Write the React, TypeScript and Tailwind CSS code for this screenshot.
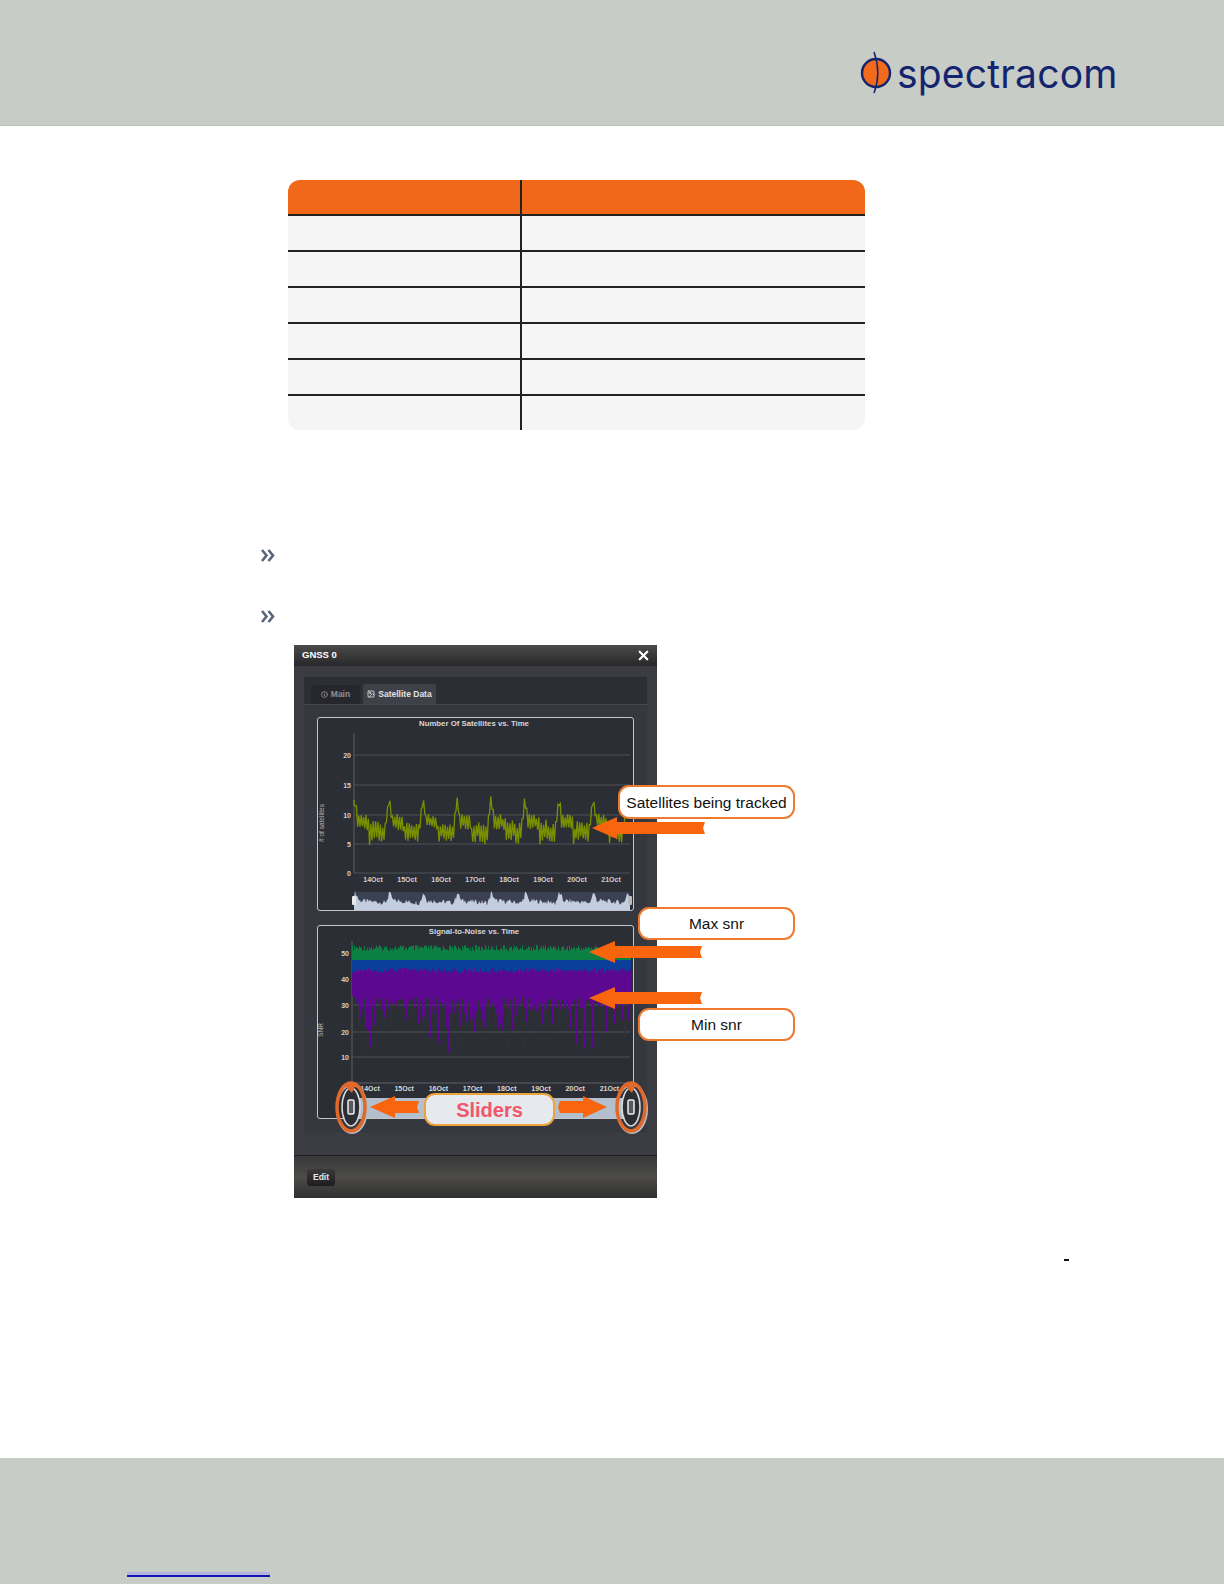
import { Image, Info, X } from 'lucide-react';

// deterministic noise so the charts look the same on every run
const noise = (i: number) => {
  const v = Math.sin(i * 12.9898) * 43758.5453;
  return v - Math.floor(v);
};

const DAYS = ['14Oct', '15Oct', '16Oct', '17Oct', '18Oct', '19Oct', '20Oct', '21Oct'];

// stepped zigzag that falls from a peak at the start of each day
function satellitesPath() {
  let d = 'M354 800';
  for (let x = 354, i = 0; x < 627; x += 1.2, i++) {
    const phase = (((x - 355) % 34) + 34) % 34 / 34;
    let mid = 830;
    let swing = 10;
    if (phase < 0.07) {
      mid = 800 + phase * 200;
      swing = 5;
    } else if (phase < 0.42) {
      mid = 820 + phase * 8;
      swing = 8;
    } else if (phase < 0.9) {
      mid = 832 + Math.sin(phase * 18) * 2;
      swing = 11;
    } else {
      mid = 826 - (phase - 0.9) * 270;
      swing = 6;
    }
    const y = mid + (i % 2 === 0 ? -1 : 1) * swing * (0.45 + noise(i) * 0.55);
    d += `L${x.toFixed(1)} ${y.toFixed(1)}`;
  }
  return d;
}

function navigatorPath(x0: number, x1: number, base: number) {
  let d = `M${x0} ${base}`;
  for (let x = x0, i = 0; x <= x1; x += 1, i++) {
    const phase = (((x - 355) % 34) + 34) % 34 / 34;
    const peak = phase < 0.1 ? 1 - phase * 5 : phase > 0.88 ? (phase - 0.88) * 6 : 0.3 - phase * 0.25;
    d += `L${x} ${(base - 5 - peak * 11 - noise(i) * 5).toFixed(1)}`;
  }
  return d + `L${x1} ${base}Z`;
}

function bandPath(from: (i: number) => number, to: (i: number) => number) {
  let d = '';
  for (let x = 352, i = 0; x < 631; x += 1, i++) {
    d += `M${x + 0.5} ${from(i).toFixed(1)}V${to(i).toFixed(1)}`;
  }
  return d;
}

const satellites = satellitesPath();
const navTop = navigatorPath(354, 630, 911);
const green = bandPath((i) => 945 + noise(i) * 6, () => 960);
const blue = bandPath(() => 958, (i) => 968 + noise(i + 11) * 5);
const purple = bandPath(
  () => 968,
  (i) => {
    const n = noise(i + 23);
    return n > 0.93 ? 1034 + noise(i) * 20 : n > 0.65 ? 1012 + noise(i) * 20 : 996 + noise(i) * 14;
  }
);

function SatelliteChart() {
  const grid: [number, string][] = [[755, '20'], [785, '15'], [815, '10'], [844, '5'], [873, '0']];
  return (
    <div className="h-[194px] rounded-[3px] border border-[#c4c6cc] bg-[#2c2e35]">
      <svg viewBox="318 718 315 192" className="block h-[192px] w-[315px]" fontFamily="'Liberation Sans', sans-serif" fontWeight="700">
        <text x="474" y="726" textAnchor="middle" fontSize="7.8" fill="#d8d8d8">Number Of Satellites vs. Time</text>
        <line x1="354" y1="733" x2="354" y2="873" stroke="#6c6f75" strokeWidth="0.8" />
        {grid.map(([y, label]) => (
          <g key={label}>
            <line x1="354" y1={y} x2="630" y2={y} stroke="#585b62" strokeWidth="0.8" />
            <text x="351" y={y + 3} textAnchor="end" fontSize="7" fill="#d0d0d0">{label}</text>
          </g>
        ))}
        <text transform="translate(324 823) rotate(-90)" textAnchor="middle" fontSize="6.5" fontWeight="400" fill="#b8b8b8"># of satellites</text>
        <path d={satellites} stroke="#7a9000" strokeWidth="1.3" fill="none" />
        {DAYS.map((day, i) => (
          <text key={day} x={373 + i * 34} y="882" textAnchor="middle" fontSize="7" fill="#d0d0d0">{day}</text>
        ))}
        <rect x="354" y="892" width="276" height="18" fill="#3b4052" />
        <path d={navTop} fill="#c3cde0" />
        <rect x="352" y="896" width="4" height="9" rx="1" fill="#e8e8e8" />
        <rect x="628" y="896" width="4" height="9" rx="1" fill="#bbbbbb" />
      </svg>
    </div>
  );
}

function SnrChart() {
  const grid: [number, string][] = [[953, '50'], [979, '40'], [1005, '30'], [1032, '20'], [1057, '10']];
  return (
    <div className="h-[194px] rounded-[3px] border border-[#c4c6cc] bg-[#2c2e35]">
      <svg viewBox="318 926 315 192" className="block h-[192px] w-[315px]" fontFamily="'Liberation Sans', sans-serif" fontWeight="700">
        <text x="474" y="934" textAnchor="middle" fontSize="7.8" fill="#d8d8d8">Signal-to-Noise vs. Time</text>
        <line x1="352" y1="941" x2="352" y2="1083" stroke="#6c6f75" strokeWidth="0.8" />
        <line x1="352" y1="1083" x2="630" y2="1083" stroke="#6c6f75" strokeWidth="0.8" />
        {grid.map(([y, label]) => (
          <g key={label}>
            <line x1="352" y1={y} x2="630" y2={y} stroke="#585b62" strokeWidth="0.8" />
            <text x="349" y={y + 3} textAnchor="end" fontSize="7" fill="#d0d0d0">{label}</text>
          </g>
        ))}
        <text transform="translate(323 1030) rotate(-90)" textAnchor="middle" fontSize="6.5" fontWeight="400" fill="#b8b8b8">SNR</text>
        <path d={purple} stroke="#5c0890" strokeWidth="1" fill="none" />
        <path d={blue} stroke="#0b3f9c" strokeWidth="1" fill="none" />
        <path d={green} stroke="#0b8042" strokeWidth="1" fill="none" />
        {DAYS.map((day, i) => (
          <text key={day} x={370 + i * 34.2} y="1091" textAnchor="middle" fontSize="7" fill="#d8d8d8">{day}</text>
        ))}
        <rect x="352" y="1098" width="280" height="20" fill="#b4bfce" />
      </svg>
    </div>
  );
}

function Callout({ className, children }: { className: string; children: string }) {
  return (
    <div className={`absolute flex items-center justify-center rounded-[11px] border-2 border-[#ee7a30] bg-white pt-[1px] font-['Liberation_Sans',sans-serif] text-[15.5px] text-[#111] ${className}`}>
      {children}
    </div>
  );
}

// arrows and slider rings sit on top of the dialog, so they share one overlay
function Overlay() {
  const arrow = (tip: number, y: number, head: number, end: number, half: number, shaft: number) =>
    `M${tip} ${y}L${head} ${y - half}V${y - shaft}H${end}l-2 ${shaft}l2 ${shaft}H${head}V${y + half}Z`;
  return (
    <svg viewBox="294 645 520 560" className="pointer-events-none absolute left-0 top-0 h-[560px] w-[520px]">
      <path d={arrow(592, 828, 617, 705, 11, 6)} fill="#f9650c" />
      <path d={arrow(589, 952, 615, 702, 11, 6)} fill="#f9650c" />
      <path d={arrow(589, 998, 615, 702, 11, 6)} fill="#f9650c" />
      <path d={arrow(370, 1107, 395, 419, 11, 6)} fill="#f9650c" />
      <path d={arrow(607, 1107, 583, 560, 11, 6)} fill="#f9650c" />
      {[351, 631].map((cx) => (
        <g key={cx}>
          <ellipse cx={cx + 1} cy="1109" rx="15" ry="24" fill="none" stroke="#b9bcc2" strokeWidth="2" />
          <ellipse cx={cx} cy="1107" rx="9" ry="19" fill="#2c2e35" stroke="#d8dade" strokeWidth="1.5" />
          <ellipse cx={cx} cy="1107" rx="14" ry="24" fill="none" stroke="#e0692a" strokeWidth="3.5" />
          <path d={`M${cx - 7} 1085l8 8l4 -9z`} fill="#e0692a" />
          <rect x={cx - 3} y="1100" width="6" height="14" rx="1.5" fill="#55585e" stroke="#f0f0f0" strokeWidth="1.5" />
        </g>
      ))}
    </svg>
  );
}

function Dialog() {
  return (
    <div className="flex h-[553px] w-[363px] flex-col bg-[#3a3c42] font-['Liberation_Sans',sans-serif]">
      <div className="flex h-[21px] items-center justify-between bg-gradient-to-b from-[#4b4b4b] to-[#28282a] pl-[8px] pr-[6px]">
        <span className="text-[9.5px] font-bold text-white">GNSS 0</span>
        <X size={15} strokeWidth={3.5} className="text-white" />
      </div>
      <div className="flex-1 px-[10px] pt-[11px]">
        <div className="h-[456px] rounded-t-[3px] bg-[#36383f]">
          <div className="flex h-[27px] items-end gap-[3px] bg-[#2c2e34] pl-[7px]">
            <div className="flex h-[19px] w-[49px] items-center justify-center gap-[3px] rounded-t-[2px] bg-[#26272c] text-[8.5px] font-bold text-[#8f9094]">
              <Info size={7} strokeWidth={3} />
              Main
            </div>
            <div className="flex h-[20px] w-[73px] items-center justify-center gap-[3px] rounded-t-[2px] bg-[#3e4148] text-[8.5px] font-bold text-[#e2e2e2]">
              <Image size={8} strokeWidth={2.5} />
              Satellite Data
            </div>
          </div>
          <div className="flex flex-col gap-[14px] border-t border-[#46484f] px-[13px] pt-[12px]">
            <SatelliteChart />
            <SnrChart />
          </div>
        </div>
      </div>
      <div className="flex h-[43px] items-center border-t border-[#1f1f22] bg-gradient-to-b from-[#38383a] via-[#4c4b47] to-[#303031] pl-[13px]">
        <div className="flex h-[17px] w-[28px] items-center justify-center rounded-[3px] bg-gradient-to-b from-[#3a3a3c] to-[#1d1d1f] text-[8.5px] font-bold text-[#e8e8e8]">
          Edit
        </div>
      </div>
    </div>
  );
}

function Bullet({ className }: { className: string }) {
  return (
    <svg viewBox="0 0 14 13" className={`h-[13px] w-[14px] ${className}`} fill="none" stroke="#596478" strokeWidth="2.6">
      <path d="M1 1l4.5 5.5L1 12M7.5 1l4.5 5.5L7.5 12" />
    </svg>
  );
}

const ROWS = [0, 1, 2, 3, 4, 5];

export default function App() {
  return (
    <div className="flex h-[1584px] w-[1224px] flex-col overflow-hidden bg-white">
      <header className="flex h-[126px] shrink-0 items-start border-b border-[#bdc1ba] bg-[#c8ccc6] pl-[860px] pt-[50px]">
        <svg viewBox="0 0 32 44" className="h-[44px] w-[32px] shrink-0">
          <circle cx="16" cy="23" r="14" fill="#f26a1b" stroke="#14246e" strokeWidth="2.4" />
          <path d="M14 2c5 14 5 28 0 41" fill="none" stroke="#14246e" strokeWidth="1.5" />
        </svg>
        <span className="ml-[5px] mt-[-4px] font-['Inter',sans-serif] text-[39px] leading-[56px] tracking-[0.2px] text-[#14246e]">spectracom</span>
      </header>

      <main className="flex-1">
        <div className="ml-[288px] mt-[54px] w-[577px] overflow-hidden rounded-[12px] bg-[#f5f5f5]">
          <div className="flex h-[36px] border-b-2 border-[#222] bg-[#f2681a]">
            <div className="w-[234px] border-r-2 border-[#222]" />
          </div>
          {ROWS.map((row) => (
            <div key={row} className={row < 5 ? 'flex h-[36px] border-b-2 border-[#222]' : 'flex h-[34px]'}>
              <div className="w-[234px] border-r-2 border-[#222]" />
            </div>
          ))}
        </div>

        <Bullet className="ml-[261px] mt-[119px]" />
        <Bullet className="ml-[261px] mt-[48px]" />

        <div className="relative ml-[294px] mt-[22px] w-[363px]">
          <Dialog />
          <Overlay />
          <Callout className="left-[324px] top-[140px] h-[34px] w-[177px]">Satellites being tracked</Callout>
          <Callout className="left-[344px] top-[262px] h-[33px] w-[157px]">Max snr</Callout>
          <Callout className="left-[344px] top-[363px] h-[33px] w-[157px]">Min snr</Callout>
          <div className="absolute left-[130px] top-[448px] flex h-[33px] w-[131px] items-center justify-center rounded-[11px] border-2 border-[#eda33c] bg-[#e6e9ed] font-['Liberation_Sans',sans-serif] text-[20px] font-bold text-[#f2566a]">
            Sliders
          </div>
        </div>

        <div className="ml-[1064px] mt-[61px] h-[2px] w-[5px] bg-[#111]" />
      </main>

      <footer className="flex h-[126px] shrink-0 items-end bg-[#c8ccc6] pb-[7px] pl-[127px]">
        <div className="h-[5px] w-[143px] border-b-2 border-[#1414b4] bg-[#b4b4e0]" />
      </footer>
    </div>
  );
}
